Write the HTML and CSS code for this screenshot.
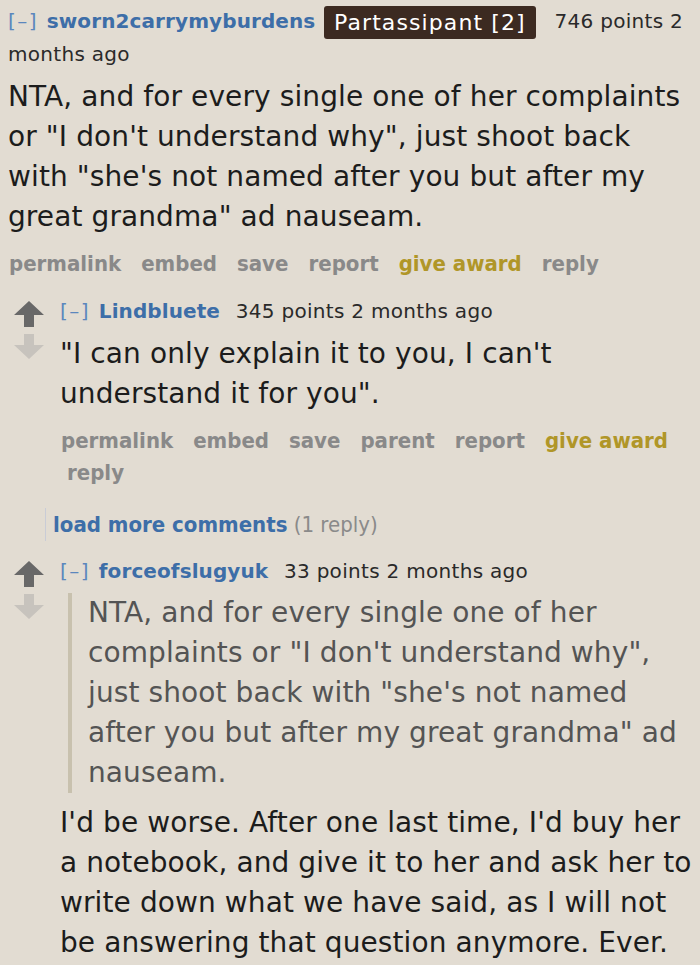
FILE: index.html
```html
<!DOCTYPE html>
<html>
<head>
<meta charset="utf-8">
<link rel="stylesheet" href="styles.css">
</head>
<body>
<div class="thread">
  <div class="comment top">
    <div class="tagline">
      <span class="expand">[–]</span> <a class="author">sworn2carrymyburdens</a> <span class="flair">Partassipant [2]</span> <span class="score">746 points</span> <span class="time">2 months ago</span>
    </div>
    <div class="md">
      <p>NTA, and for every single one of her complaints or "I don't understand why", just shoot back with "she's not named after you but after my great grandma" ad nauseam.</p>
    </div>
    <ul class="buttons">
      <li>permalink</li><li>embed</li><li>save</li><li>report</li><li class="award">give award</li><li>reply</li>
    </ul>
  </div>

  <div class="comment child">
    <div class="vote">
      <svg class="arrow up" viewBox="0 0 30 26" width="30" height="26"><path d="M15 0 L30 14 L20 14 L20 26 L10 26 L10 14 L0 14 Z"/></svg>
      <svg class="arrow down" viewBox="0 0 30 26" width="30" height="26"><path d="M10 0 L20 0 L20 11 L30 11 L15 25 L0 11 L10 11 Z"/></svg>
    </div>
    <div class="entry">
      <div class="tagline">
        <span class="expand">[–]</span> <a class="author">Lindbluete</a> <span class="score">345 points</span> <span class="time">2 months ago</span>
      </div>
      <div class="md">
        <p>"I can only explain it to you, I can't understand it for you".</p>
      </div>
      <ul class="buttons">
        <li>permalink</li><li>embed</li><li>save</li><li>parent</li><li>report</li><li class="award">give award</li><li>reply</li>
      </ul>
    </div>
  </div>

  <div class="more">
    <a class="more-link">load more comments</a> <span class="count">(1 reply)</span>
  </div>

  <div class="comment child second">
    <div class="vote">
      <svg class="arrow up" viewBox="0 0 30 26" width="30" height="26"><path d="M15 0 L30 14 L20 14 L20 26 L10 26 L10 14 L0 14 Z"/></svg>
      <svg class="arrow down" viewBox="0 0 30 26" width="30" height="26"><path d="M10 0 L20 0 L20 11 L30 11 L15 25 L0 11 L10 11 Z"/></svg>
    </div>
    <div class="entry">
      <div class="tagline">
        <span class="expand">[–]</span> <a class="author">forceofslugyuk</a> <span class="score">33 points</span> <span class="time">2 months ago</span>
      </div>
      <div class="md">
        <blockquote>NTA, and for every single one of her complaints or "I don't understand why", just shoot back with "she's not named after you but after my great grandma" ad nauseam.</blockquote>
        <p>I'd be worse. After one last time, I'd buy her a notebook, and give it to her and ask her to write down what we have said, as I will not be answering that question anymore. Ever.</p>
      </div>
    </div>
  </div>
</div>
</body>
</html>
```

FILE: styles.css
```css
html, body {
  margin: 0;
  padding: 0;
  background: #e2dcd2;
}
body {
  width: 700px;
  height: 965px;
  overflow: hidden;
  font-family: "DejaVu Sans", Verdana, sans-serif;
  color: #1c1c1c;
}
.thread {
  padding: 6px 4px 0 8px;
}
.tagline {
  font-size: 20px;
  line-height: 31px;
  color: #2a2a2a;
  letter-spacing: 0.3px;
}
.expand {
  color: #5b87bd;
  letter-spacing: 1.5px;
  margin-right: 2px;
}
.author {
  color: #3d6ea8;
  font-weight: bold;
  font-size: 20px;
  letter-spacing: 0.1px;
  margin-right: 2px;
}
.child .author {
  margin-right: 9px;
}
.flair {
  display: inline-block;
  background: #3c2a21;
  color: #fff;
  font-size: 22px;
  line-height: 33px;
  letter-spacing: 1.1px;
  padding: 0 10px;
  border-radius: 3px;
  vertical-align: top;
  margin-right: 12px;
}
.md p, .md blockquote {
  margin: 0;
  font-size: 28px;
  line-height: 40px;
  letter-spacing: 0.1px;
}
.top .md {
  margin-top: 7px;
}
.buttons {
  list-style: none;
  margin: 11px 0 0 0;
  padding: 0;
  font-family: "DejaVu Sans Condensed", "DejaVu Sans", sans-serif;
  font-weight: bold;
  font-size: 22px;
  line-height: 32px;
  color: #898989;
}
.buttons li {
  display: inline-block;
  margin-right: 13px;
  padding-left: 7px;
}
.buttons li:first-child {
  padding-left: 1px;
}
.buttons .award {
  color: #b09628;
}
.child {
  display: flex;
  margin-top: 16px;
}
.vote {
  width: 52px;
  flex: none;
  display: flex;
  flex-direction: column;
  padding-top: 5px;
  padding-left: 6px;
  box-sizing: border-box;
  gap: 7px;
}
.arrow { display: block; }
.arrow.up { fill: #686868; }
.arrow.down { fill: #c7c3bd; }
.entry {
  flex: 1;
}
.child .md {
  margin-top: 7px;
}
.more {
  margin: 19px 0 0 37px;
  border-left: 1px solid #c9ccd6;
  padding-left: 7px;
  font-family: "DejaVu Sans Condensed", "DejaVu Sans", sans-serif;
  font-size: 22px;
  line-height: 33px;
}
.more-link {
  color: #3d6ea8;
  font-weight: bold;
}
.more .count {
  color: #8a8a8a;
}
.second {
  margin-top: 15px;
}
.second .md {
  margin-top: 6px;
}
blockquote {
  margin: 0 0 10px 8px !important;
  border-left: 4px solid #c8c1ae;
  padding-left: 16px;
  color: #545454;
}
```
